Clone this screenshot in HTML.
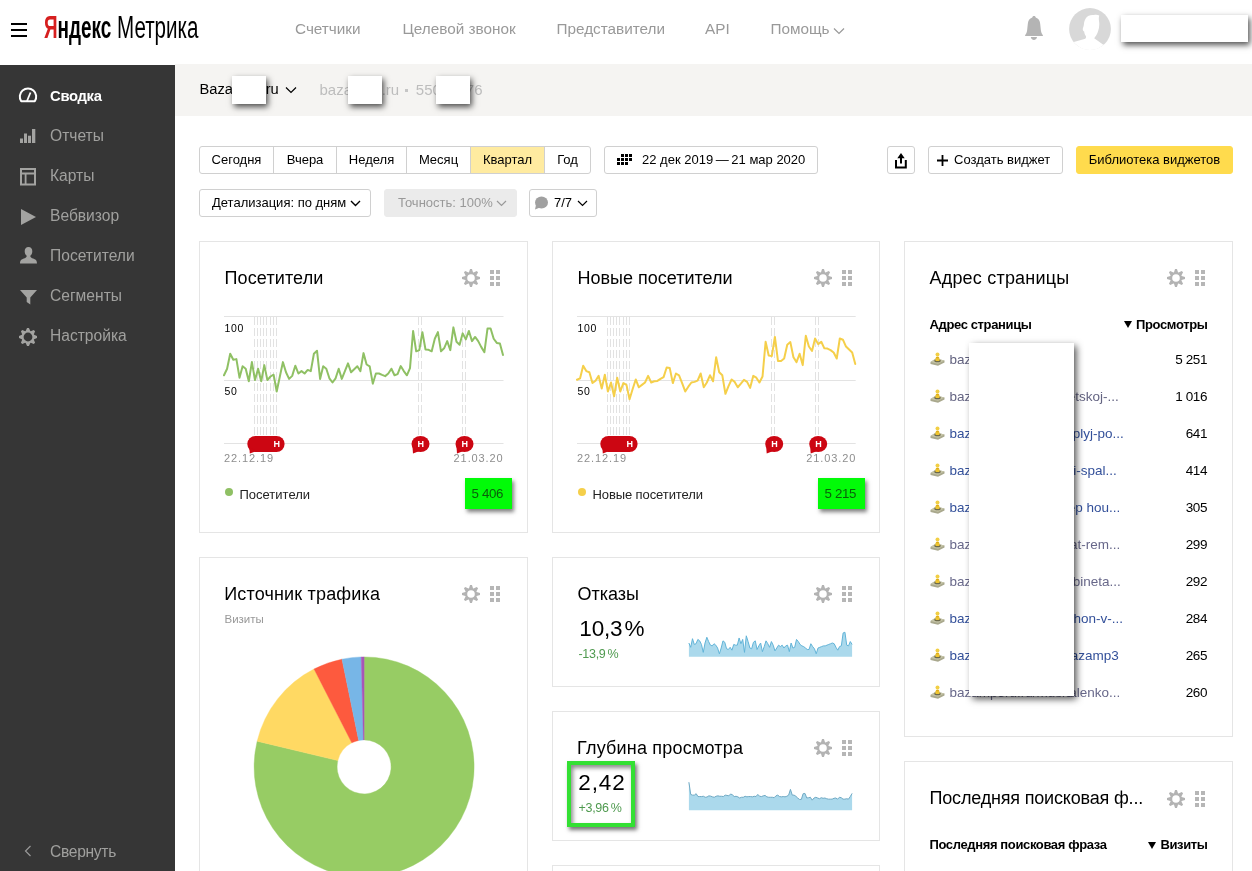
<!DOCTYPE html>
<html lang="ru">
<head>
<meta charset="utf-8">
<title>Яндекс.Метрика</title>
<style>
*{box-sizing:border-box;margin:0;padding:0}
html,body{width:1252px;height:871px;overflow:hidden;background:#fff}
body{will-change:transform;font-family:"Liberation Sans",sans-serif;color:#000;position:relative;font-size:13px}
.abs{position:absolute}
.t{position:absolute;white-space:nowrap;line-height:1}
/* header */
#hdr{position:absolute;left:0;top:0;width:1252px;height:64px;background:#fff}
.nav{position:absolute;top:20.300px;font-size:15.3px;color:#999;white-space:nowrap;line-height:18px}
/* sidebar */
#side{position:absolute;left:0;top:65px;width:175px;height:806px;background:#363636}
.si{position:absolute;left:50px;font-size:15.6px;color:#a0a09e;white-space:nowrap;line-height:20px}
.si.on{color:#fff;font-weight:700;font-size:14.8px;letter-spacing:-.3px;margin-top:0}
/* sub header */
#sub{position:absolute;left:175px;top:64px;width:1077px;height:52px;background:#f5f4f2}
.mask{position:absolute;background:#fff;box-shadow:2px 2.500px 6px rgba(0,0,0,.68)}
/* buttons */
.btn{position:absolute;height:28px;border:1px solid #d0d0d0;border-radius:3px;background:#fff;font-size:13px;line-height:26px;white-space:nowrap;color:#000}
.seg{position:absolute;top:0;height:26px;line-height:26px;text-align:center;border-left:1px solid #d0d0d0}
/* cards */
.card{position:absolute;border:1px solid #e5e5e5;background:#fff}
.ttl{position:absolute;font-size:18px;line-height:22px;white-space:nowrap;color:#000}
.gear{position:absolute;width:18px;height:18px}
.grid{position:absolute;width:10px;height:16px}
.row{position:absolute;left:929px;width:279px;height:20px;font-size:13px;line-height:20px}
.row .u{position:absolute;left:20px;top:0;color:#3a4b8c;white-space:nowrap;font-size:13.5px}
.row .v{position:absolute;right:0;top:0;color:#000;font-size:13.5px;letter-spacing:-.3px}
.row svg{position:absolute;left:1px;top:1px}
.ax{font-size:10.5px;letter-spacing:.7px;color:#000}
.dt{font-size:11px;letter-spacing:.9px;color:#8e8e8e}
.gbox{background:#02fb08;box-shadow:2px 2.500px 4px rgba(0,0,0,.5);font-size:13.3px;line-height:32px;text-align:center;color:#0b5f0b;letter-spacing:-.4px;white-space:nowrap;padding-right:2.500px}
.th{font-size:13px;font-weight:700;letter-spacing:-.37px;color:#000}
.tri{display:inline-block;width:0;height:0;border-left:4px solid transparent;border-right:4px solid transparent;border-top:7.500px solid #000;margin-right:4px;vertical-align:.5px}
.url{font-size:13.5px}
.val{font-size:13.5px;letter-spacing:-.4px;color:#000}
.big{font-size:22.5px;color:#000}
.dl{font-size:12.5px;color:#4f9a4f;letter-spacing:-.3px}
</style>
</head>
<body>

<!-- ============ HEADER ============ -->
<div id="hdr">
  <svg class="abs" style="left:11px;top:23px" width="16" height="14" viewBox="0 0 16 14"><rect x="0" y="0" width="16" height="2" fill="#000"/><rect x="0" y="6" width="16" height="2" fill="#000"/><rect x="0" y="12" width="16" height="2" fill="#000"/></svg>
  <div class="t" id="lg1" style="left:43.500px;top:12.400px;font-size:31px;font-weight:700;transform-origin:0 0;transform:scaleX(.61);line-height:32px"><span style="color:#d61f1f">Я</span>ндекс</div>
  <div class="t" id="lg2" style="left:116.500px;top:12.400px;font-size:31px;font-weight:400;transform-origin:0 0;transform:scaleX(.664);line-height:32px">Метрика</div>

  <div class="nav" style="left:295px">Счетчики</div>
  <div class="nav" style="left:402.5px">Целевой звонок</div>
  <div class="nav" style="left:556.5px">Представители</div>
  <div class="nav" style="left:705px">API</div>
  <div class="nav" style="left:770.5px">Помощь</div>
  <svg class="abs" style="left:833px;top:27px" width="12" height="8" viewBox="0 0 12 8"><path d="M1 1.5 L6 6.5 L11 1.5" fill="none" stroke="#999" stroke-width="1.2"/></svg>

  <!-- bell -->
  <svg class="abs" style="left:1024px;top:15px" width="20" height="26" viewBox="0 0 20 26"><path d="M10,1.100 C11,1.100 11.700,1.800 11.700,2.600 C14.500,3.400 16,5.800 16.200,9 L16.900,15.500 C17.200,17.500 18,19.200 18.900,20.200 L18.900,20.900 L1.100,20.900 L1.100,20.200 C2,19.200 2.800,17.500 3.100,15.500 L3.800,9 C4,5.800 5.500,3.400 8.300,2.600 C8.300,1.800 9,1.100 10,1.100 Z" fill="#b4b4b4"/><path d="M6.800,22.100 H13 C12.800,23.800 11.600,25 9.900,25 C8.200,25 7,23.800 6.800,22.100 Z" fill="#b4b4b4"/></svg>
  <!-- avatar -->
  <svg class="abs" style="left:1069px;top:8px" width="42" height="42" viewBox="0 0 42 42">
    <defs><clipPath id="avc"><circle cx="21" cy="21" r="21"/></clipPath></defs>
    <circle cx="21" cy="21" r="20.900" fill="#d8d8d8"/>
    <g clip-path="url(#avc)" fill="#fff">
      <path d="M17,10 C18.500,7.500 22,6.500 25,7 C27,6.600 29,6.800 30.300,7.600 C29.600,9.500 29.800,11 30,13 C30.600,16 30.300,20 29,23.500 C28.200,26 27,28 25.200,30.200 L34,36.500 L44,40 L44,44 L-2,44 L-2,36 L3,34.500 L16.300,30.700 C17.300,29.800 17.300,28.500 16.500,27.500 C15.600,26.300 15.300,25 15.200,23.600 C14.300,23 13.600,22 13.800,20.800 C14.100,19.500 14.800,18 14.900,16.500 C15,14 15.800,12 17,10 Z"/>
    </g>
  </svg>
  <div class="mask" style="left:1121px;top:15px;width:127px;height:27px"></div>
</div>

<!-- ============ SIDEBAR ============ -->
<div id="side"></div>
<div class="si on" style="top:86px">Сводка</div>
<div class="si" style="top:126px">Отчеты</div>
<div class="si" style="top:166px">Карты</div>
<div class="si" style="top:206px">Вебвизор</div>
<div class="si" style="top:246px">Посетители</div>
<div class="si" style="top:286px">Сегменты</div>
<div class="si" style="top:326px">Настройка</div>
<div class="si" style="top:842px;letter-spacing:-.3px">Свернуть</div>
<svg class="abs" style="left:24px;top:845px" width="8" height="12" viewBox="0 0 8 12"><path d="M6.500 1 L1.500 6 L6.500 11" fill="none" stroke="#999" stroke-width="1.2"/></svg>
<svg class="abs" style="left:18px;top:87px" width="20" height="16" viewBox="0 0 20 16"><path d="M3.200 14.200 A8.200 8.200 0 1 1 16.800 14.200 Z" fill="none" stroke="#fff" stroke-width="2" stroke-linejoin="round"/><path d="M9 14 L12.500 5.500" stroke="#fff" stroke-width="1.800" fill="none"/></svg>
<svg class="abs" style="left:20px;top:129px" width="16" height="14" viewBox="0 0 16 14" fill="#a3a3a1"><rect x="0" y="9.500" width="3" height="4.500"/><rect x="4" y="4.500" width="3" height="9.500"/><rect x="8" y="6.700" width="3" height="7.300"/><rect x="12" y="0" width="3.300" height="14"/></svg>
<svg class="abs" style="left:20px;top:168px" width="16" height="18" viewBox="0 0 16 18"><rect x="1" y="1" width="14" height="15.500" fill="none" stroke="#a3a3a1" stroke-width="2"/><path d="M1 5.500 H15 M5.600 5.500 V16.500" stroke="#a3a3a1" stroke-width="1.800" fill="none"/></svg>
<svg class="abs" style="left:21px;top:209px" width="15" height="16" viewBox="0 0 15 16"><path d="M0 0 L15 8 L0 16 Z" fill="#a3a3a1"/></svg>
<svg class="abs" style="left:19.500px;top:247px" width="17" height="16.500" viewBox="0 0 17 16.500"><path d="M8.500 0 C11 0 12.300 1.800 12.300 4.200 C12.300 6.200 11.500 8 10.300 8.800 C10.300 10.200 11 10.800 13 11.500 C15.500 12.300 16.800 13 17 16.500 H0 C0.200 13 1.500 12.300 4 11.500 C6 10.800 6.700 10.200 6.700 8.800 C5.500 8 4.700 6.200 4.700 4.200 C4.700 1.800 6 0 8.500 0 Z" fill="#a3a3a1"/></svg>
<svg class="abs" style="left:19.500px;top:290px" width="17" height="15" viewBox="0 0 17 15"><path d="M0 0 H17 L10.300 7.500 V14.500 L6.700 12 V7.500 Z" fill="#a3a3a1"/></svg>
<svg class="abs" style="left:19px;top:328.300px" width="18" height="18" viewBox="0 0 18 18"><path fill-rule="evenodd" d="M6.83,2.87 L8.05,-0.05 L9.95,-0.05 L11.17,2.87 L11.80,3.13 L14.72,1.93 L16.07,3.28 L14.87,6.20 L15.13,6.83 L18.05,8.05 L18.05,9.95 L15.13,11.17 L14.87,11.80 L16.07,14.72 L14.72,16.07 L11.80,14.87 L11.17,15.13 L9.95,18.05 L8.05,18.05 L6.83,15.13 L6.20,14.87 L3.28,16.07 L1.93,14.72 L3.13,11.80 L2.87,11.17 L-0.05,9.95 L-0.05,8.05 L2.87,6.83 L3.13,6.20 L1.93,3.28 L3.28,1.93 L6.20,3.13 Z M13.40,9.00 A4.4,4.4 0 1 0 4.60,9.00 A4.4,4.4 0 1 0 13.40,9.00 Z" fill="#a3a3a1"/></svg>

<!-- ============ SUB HEADER ============ -->
<div id="sub"></div>
<div class="t" style="left:199.500px;top:82.300px;font-size:14.7px;color:#000">Bazamp3.ru</div>
<svg class="abs" style="left:285px;top:86px" width="12" height="8" viewBox="0 0 12 8"><path d="M1 1.500 L6 6.500 L11 1.500" fill="none" stroke="#000" stroke-width="1.200"/></svg>
<div class="t" style="left:319.500px;top:82px;font-size:15px;color:#bdbdbd">bazamp3</div>
<div class="t" style="left:340px;width:59.200px;text-align:right;top:82px;font-size:15px;color:#bdbdbd">ru.ru</div>
<div class="abs" style="left:405px;top:89px;width:3px;height:3px;background:#c6c6c6"></div>
<div class="t" style="left:415.800px;top:82px;font-size:15px;color:#bdbdbd">55012376</div>
<div class="mask" style="left:232px;top:76px;width:34px;height:27.500px"></div>
<div class="mask" style="left:348px;top:76px;width:34px;height:27.500px"></div>
<div class="mask" style="left:436px;top:76px;width:34px;height:27.500px"></div>

<!-- ============ TOOLBAR ============ -->
<div class="btn" style="left:199px;top:146px;width:392px">
  <div class="seg" style="left:0;width:73px;border-left:0">Сегодня</div>
  <div class="seg" style="left:73px;width:63px">Вчера</div>
  <div class="seg" style="left:136px;width:70px">Неделя</div>
  <div class="seg" style="left:206px;width:64px">Месяц</div>
  <div class="seg" style="left:270px;width:74px;background:#ffeba0">Квартал</div>
  <div class="seg" style="left:344px;width:46px">Год</div>
</div>
<div class="btn" style="left:604px;top:146px;width:214px">
  <svg class="abs" style="left:12px;top:7px" width="15" height="11" viewBox="0 0 15 11" fill="#000"><rect x="4" y="0" width="3" height="3"/><rect x="8" y="0" width="3" height="3"/><rect x="12" y="0" width="3" height="3"/><rect x="0" y="4" width="3" height="3"/><rect x="4" y="4" width="3" height="3"/><rect x="8" y="4" width="3" height="3"/><rect x="12" y="4" width="3" height="3"/><rect x="0" y="8" width="3" height="3"/><rect x="4" y="8" width="3" height="3"/><rect x="8" y="8" width="3" height="3"/></svg>
  <span class="abs" style="left:37px;top:0">22 дек 2019&#8201;—&#8201;21 мар 2020</span>
</div>
<div class="btn" style="left:887px;top:146px;width:28px">
  <svg class="abs" style="left:7px;top:6.400px" width="12" height="16" viewBox="0 0 12 16"><path d="M6 0 L9.700 5.200 H7 V10.600 H5 V5.200 H2.300 Z" fill="#000"/><path d="M0 7 H2 V13.400 H9.800 V7 H11.800 V15.400 H0 Z" fill="#000"/></svg>
</div>
<div class="btn" style="left:928px;top:146px;width:135px">
  <svg class="abs" style="left:8px;top:8px" width="11" height="11" viewBox="0 0 11 11"><path d="M4.600 0h1.800v4.600h4.600v1.800H6.400v4.600H4.600V6.400H0V4.600h4.600z" fill="#000"/></svg>
  <span class="abs" style="left:25px;top:0">Создать виджет</span>
</div>
<div class="btn" style="left:1076px;top:146px;width:157px;background:#ffdb4d;border-color:#ffdb4d;text-align:center">Библиотека виджетов</div>

<div class="btn" style="left:199px;top:189px;width:172px">
  <span class="abs" style="left:12px;top:0">Детализация: по дням</span>
  <svg class="abs" style="left:150px;top:10px" width="11" height="7" viewBox="0 0 11 7"><path d="M1 1 L5.500 5.500 L10 1" fill="none" stroke="#000" stroke-width="1.400"/></svg>
</div>
<div class="btn" style="left:384px;top:189px;width:133px;background:#ebebeb;border-color:#ebebeb;color:#999">
  <span class="abs" style="left:13px;top:0">Точность: 100%</span>
  <svg class="abs" style="left:111px;top:10px" width="11" height="7" viewBox="0 0 11 7"><path d="M1 1 L5.500 5.500 L10 1" fill="none" stroke="#999" stroke-width="1.200"/></svg>
</div>
<div class="btn" style="left:529px;top:189px;width:68px">
  <svg class="abs" style="left:3.500px;top:6px" width="14" height="14" viewBox="0 0 14 14"><ellipse cx="7.500" cy="6.500" rx="6.500" ry="6" fill="#a0a0a0"/><path d="M2 9 L1 13.500 L6 11.500 Z" fill="#a0a0a0"/></svg>
  <span class="abs" style="left:24px;top:0">7/7</span>
  <svg class="abs" style="left:47px;top:10px" width="11" height="7" viewBox="0 0 11 7"><path d="M1 1 L5.500 5.500 L10 1" fill="none" stroke="#000" stroke-width="1.200"/></svg>
</div>

<!-- ============ CARDS ============ -->
<div class="card" style="left:199px;top:241px;width:329px;height:292px"></div>
<div class="card" style="left:552px;top:241px;width:328px;height:292px"></div>
<div class="card" style="left:904px;top:241px;width:329px;height:496px"></div>
<div class="card" style="left:199px;top:557px;width:329px;height:330px"></div>
<div class="card" style="left:552px;top:557px;width:328px;height:130px"></div>
<div class="card" style="left:552px;top:711px;width:328px;height:130px"></div>
<div class="card" style="left:552px;top:865px;width:328px;height:40px"></div>
<div class="card" style="left:904px;top:761px;width:329px;height:140px"></div>

<div class="ttl" style="left:224.5px;top:267px;letter-spacing:0.13px">Посетители</div>
<svg class="abs" style="left:462px;top:269px" width="18" height="18" viewBox="0 0 18 18"><path fill-rule="evenodd" d="M7.00,3.34 L8.05,-0.05 L9.95,-0.05 L11.00,3.34 L11.58,3.59 L14.72,1.93 L16.07,3.28 L14.41,6.42 L14.66,7.00 L18.05,8.05 L18.05,9.95 L14.66,11.00 L14.41,11.58 L16.07,14.72 L14.72,16.07 L11.58,14.41 L11.00,14.66 L9.95,18.05 L8.05,18.05 L7.00,14.66 L6.42,14.41 L3.28,16.07 L1.93,14.72 L3.59,11.58 L3.34,11.00 L-0.05,9.95 L-0.05,8.05 L3.34,7.00 L3.59,6.42 L1.93,3.28 L3.28,1.93 L6.42,3.59 Z M12.80,9.00 A3.8,3.8 0 1 0 5.20,9.00 A3.8,3.8 0 1 0 12.80,9.00 Z" fill="#b3b3b3"/></svg>
<svg class="abs" style="left:490px;top:270px" width="10" height="16" viewBox="0 0 10 16"><rect x="0" y="0" width="4" height="4" fill="#b6b6b6"/><rect x="6" y="0" width="4" height="4" fill="#b6b6b6"/><rect x="0" y="6" width="4" height="4" fill="#b6b6b6"/><rect x="6" y="6" width="4" height="4" fill="#b6b6b6"/><rect x="0" y="12" width="4" height="4" fill="#b6b6b6"/><rect x="6" y="12" width="4" height="4" fill="#b6b6b6"/></svg>
<div class="t ax" style="left:224.5px;top:323px">100</div>
<div class="t ax" style="left:224.5px;top:386px">50</div>
<div class="t dt" style="left:224px;top:452.5px">22.12.19</div>
<div class="t dt" style="left:453.6px;top:452.5px;width:49px;text-align:right">21.03.20</div>
<div class="abs" style="left:225px;top:487.700px;width:8.400px;height:8.400px;border-radius:50%;background:#8fc064"></div>
<div class="t" style="left:239.5px;top:487.700px;font-size:13px;color:#222;letter-spacing:0px">Посетители</div>
<div class="abs gbox" style="left:465px;top:478px;width:47px;height:31px">5 406</div>
<div class="ttl" style="left:577.5px;top:267px;letter-spacing:0px">Новые посетители</div>
<svg class="abs" style="left:814px;top:269px" width="18" height="18" viewBox="0 0 18 18"><path fill-rule="evenodd" d="M7.00,3.34 L8.05,-0.05 L9.95,-0.05 L11.00,3.34 L11.58,3.59 L14.72,1.93 L16.07,3.28 L14.41,6.42 L14.66,7.00 L18.05,8.05 L18.05,9.95 L14.66,11.00 L14.41,11.58 L16.07,14.72 L14.72,16.07 L11.58,14.41 L11.00,14.66 L9.95,18.05 L8.05,18.05 L7.00,14.66 L6.42,14.41 L3.28,16.07 L1.93,14.72 L3.59,11.58 L3.34,11.00 L-0.05,9.95 L-0.05,8.05 L3.34,7.00 L3.59,6.42 L1.93,3.28 L3.28,1.93 L6.42,3.59 Z M12.80,9.00 A3.8,3.8 0 1 0 5.20,9.00 A3.8,3.8 0 1 0 12.80,9.00 Z" fill="#b3b3b3"/></svg>
<svg class="abs" style="left:842px;top:270px" width="10" height="16" viewBox="0 0 10 16"><rect x="0" y="0" width="4" height="4" fill="#b6b6b6"/><rect x="6" y="0" width="4" height="4" fill="#b6b6b6"/><rect x="0" y="6" width="4" height="4" fill="#b6b6b6"/><rect x="6" y="6" width="4" height="4" fill="#b6b6b6"/><rect x="0" y="12" width="4" height="4" fill="#b6b6b6"/><rect x="6" y="12" width="4" height="4" fill="#b6b6b6"/></svg>
<div class="t ax" style="left:577.5px;top:323px">100</div>
<div class="t ax" style="left:577.5px;top:386px">50</div>
<div class="t dt" style="left:577px;top:452.5px">22.12.19</div>
<div class="t dt" style="left:806.2px;top:452.5px;width:49px;text-align:right">21.03.20</div>
<div class="abs" style="left:578px;top:487.700px;width:8.400px;height:8.400px;border-radius:50%;background:#f5cf4a"></div>
<div class="t" style="left:592.5px;top:487.700px;font-size:13px;color:#222;letter-spacing:-0.1px">Новые посетители</div>
<div class="abs gbox" style="left:818px;top:478px;width:47px;height:31px">5 215</div>
<div class="ttl" style="left:929.500px;top:267px;letter-spacing:.2px">Адрес страницы</div>
<svg class="abs" style="left:1167px;top:269px" width="18" height="18" viewBox="0 0 18 18"><path fill-rule="evenodd" d="M7.00,3.34 L8.05,-0.05 L9.95,-0.05 L11.00,3.34 L11.58,3.59 L14.72,1.93 L16.07,3.28 L14.41,6.42 L14.66,7.00 L18.05,8.05 L18.05,9.95 L14.66,11.00 L14.41,11.58 L16.07,14.72 L14.72,16.07 L11.58,14.41 L11.00,14.66 L9.95,18.05 L8.05,18.05 L7.00,14.66 L6.42,14.41 L3.28,16.07 L1.93,14.72 L3.59,11.58 L3.34,11.00 L-0.05,9.95 L-0.05,8.05 L3.34,7.00 L3.59,6.42 L1.93,3.28 L3.28,1.93 L6.42,3.59 Z M12.80,9.00 A3.8,3.8 0 1 0 5.20,9.00 A3.8,3.8 0 1 0 12.80,9.00 Z" fill="#b3b3b3"/></svg>
<svg class="abs" style="left:1195px;top:270px" width="10" height="16" viewBox="0 0 10 16"><rect x="0" y="0" width="4" height="4" fill="#b6b6b6"/><rect x="6" y="0" width="4" height="4" fill="#b6b6b6"/><rect x="0" y="6" width="4" height="4" fill="#b6b6b6"/><rect x="6" y="6" width="4" height="4" fill="#b6b6b6"/><rect x="0" y="12" width="4" height="4" fill="#b6b6b6"/><rect x="6" y="12" width="4" height="4" fill="#b6b6b6"/></svg>
<div class="t th" style="left:929.500px;top:317.500px">Адрес страницы</div>
<div class="t th" style="left:1100.500px;top:317.500px;width:107px;text-align:right"><span class="tri"></span>Просмотры</div>
<svg class="abs" style="left:929.5px;top:352px" width="15" height="14" viewBox="0 0 15 14"><path d="M0.500 10 L6 6.500 L14.500 8.500 L14.500 10.500 L8 13.800 L0.500 12 Z" fill="#a9a88d"/><path d="M0.500 10 L6 6.500 L14.500 8.500 L8 11.800 Z" fill="#c6c5a8"/><ellipse cx="7.500" cy="8.800" rx="3.200" ry="1.500" fill="#6d6a4a"/><path d="M5.300 8.500 C5.300 5.800 6 4.600 7.500 4.600 C9 4.600 9.700 5.800 9.700 8.500 C8.800 9.300 6.200 9.300 5.300 8.500 Z" fill="#efc530"/><circle cx="7.500" cy="2.500" r="2" fill="#f2cf45"/><path d="M6.200 5.200 h2.600 v1 h-2.600z" fill="#d9a514"/></svg>
<div class="t url" style="left:949.500px;top:353.0px;color:#62627f">bazamp3ru.ru/music</div>
<div class="t val" style="left:1147px;width:60px;text-align:right;top:353.0px">5 251</div>
<svg class="abs" style="left:929.5px;top:389px" width="15" height="14" viewBox="0 0 15 14"><path d="M0.500 10 L6 6.500 L14.500 8.500 L14.500 10.500 L8 13.800 L0.500 12 Z" fill="#a9a88d"/><path d="M0.500 10 L6 6.500 L14.500 8.500 L8 11.800 Z" fill="#c6c5a8"/><ellipse cx="7.500" cy="8.800" rx="3.200" ry="1.500" fill="#6d6a4a"/><path d="M5.300 8.500 C5.300 5.800 6 4.600 7.500 4.600 C9 4.600 9.700 5.800 9.700 8.500 C8.800 9.300 6.200 9.300 5.300 8.500 Z" fill="#efc530"/><circle cx="7.500" cy="2.500" r="2" fill="#f2cf45"/><path d="M6.200 5.200 h2.600 v1 h-2.600z" fill="#d9a514"/></svg>
<div class="t url" style="left:949.500px;top:390.0px;color:#646482">bazamp3ru.ru/music</div>
<div class="t url" style="left:1038.8px;width:80px;text-align:right;top:390.0px;color:#646482">etskoj-...</div>
<div class="t val" style="left:1147px;width:60px;text-align:right;top:390.0px">1 016</div>
<svg class="abs" style="left:929.5px;top:426px" width="15" height="14" viewBox="0 0 15 14"><path d="M0.500 10 L6 6.500 L14.500 8.500 L14.500 10.500 L8 13.800 L0.500 12 Z" fill="#a9a88d"/><path d="M0.500 10 L6 6.500 L14.500 8.500 L8 11.800 Z" fill="#c6c5a8"/><ellipse cx="7.500" cy="8.800" rx="3.200" ry="1.500" fill="#6d6a4a"/><path d="M5.300 8.500 C5.300 5.800 6 4.600 7.500 4.600 C9 4.600 9.700 5.800 9.700 8.500 C8.800 9.300 6.200 9.300 5.300 8.500 Z" fill="#efc530"/><circle cx="7.500" cy="2.500" r="2" fill="#f2cf45"/><path d="M6.200 5.200 h2.600 v1 h-2.600z" fill="#d9a514"/></svg>
<div class="t url" style="left:949.500px;top:427.0px;color:#33509a">bazamp3ru.ru/music</div>
<div class="t url" style="left:1043.7px;width:80px;text-align:right;top:427.0px;color:#33509a">plyj-po...</div>
<div class="t val" style="left:1147px;width:60px;text-align:right;top:427.0px">641</div>
<svg class="abs" style="left:929.5px;top:463px" width="15" height="14" viewBox="0 0 15 14"><path d="M0.500 10 L6 6.500 L14.500 8.500 L14.500 10.500 L8 13.800 L0.500 12 Z" fill="#a9a88d"/><path d="M0.500 10 L6 6.500 L14.500 8.500 L8 11.800 Z" fill="#c6c5a8"/><ellipse cx="7.500" cy="8.800" rx="3.200" ry="1.500" fill="#6d6a4a"/><path d="M5.300 8.500 C5.300 5.800 6 4.600 7.500 4.600 C9 4.600 9.700 5.800 9.700 8.500 C8.800 9.300 6.200 9.300 5.300 8.500 Z" fill="#efc530"/><circle cx="7.500" cy="2.500" r="2" fill="#f2cf45"/><path d="M6.200 5.200 h2.600 v1 h-2.600z" fill="#d9a514"/></svg>
<div class="t url" style="left:949.500px;top:464.0px;color:#33509a">bazamp3ru.ru/music</div>
<div class="t url" style="left:1036.8px;width:80px;text-align:right;top:464.0px;color:#33509a">i-spal...</div>
<div class="t val" style="left:1147px;width:60px;text-align:right;top:464.0px">414</div>
<svg class="abs" style="left:929.5px;top:500px" width="15" height="14" viewBox="0 0 15 14"><path d="M0.500 10 L6 6.500 L14.500 8.500 L14.500 10.500 L8 13.800 L0.500 12 Z" fill="#a9a88d"/><path d="M0.500 10 L6 6.500 L14.500 8.500 L8 11.800 Z" fill="#c6c5a8"/><ellipse cx="7.500" cy="8.800" rx="3.200" ry="1.500" fill="#6d6a4a"/><path d="M5.300 8.500 C5.300 5.800 6 4.600 7.500 4.600 C9 4.600 9.700 5.800 9.700 8.500 C8.800 9.300 6.200 9.300 5.300 8.500 Z" fill="#efc530"/><circle cx="7.500" cy="2.500" r="2" fill="#f2cf45"/><path d="M6.200 5.200 h2.600 v1 h-2.600z" fill="#d9a514"/></svg>
<div class="t url" style="left:949.500px;top:501.0px;color:#33509a">bazamp3ru.ru/music</div>
<div class="t url" style="left:1040.3px;width:80px;text-align:right;top:501.0px;color:#33509a">ep hou...</div>
<div class="t val" style="left:1147px;width:60px;text-align:right;top:501.0px">305</div>
<svg class="abs" style="left:929.5px;top:537px" width="15" height="14" viewBox="0 0 15 14"><path d="M0.500 10 L6 6.500 L14.500 8.500 L14.500 10.500 L8 13.800 L0.500 12 Z" fill="#a9a88d"/><path d="M0.500 10 L6 6.500 L14.500 8.500 L8 11.800 Z" fill="#c6c5a8"/><ellipse cx="7.500" cy="8.800" rx="3.200" ry="1.500" fill="#6d6a4a"/><path d="M5.300 8.500 C5.300 5.800 6 4.600 7.500 4.600 C9 4.600 9.700 5.800 9.700 8.500 C8.800 9.300 6.200 9.300 5.300 8.500 Z" fill="#efc530"/><circle cx="7.500" cy="2.500" r="2" fill="#f2cf45"/><path d="M6.200 5.200 h2.600 v1 h-2.600z" fill="#d9a514"/></svg>
<div class="t url" style="left:949.500px;top:538.0px;color:#68688a">bazamp3ru.ru/music</div>
<div class="t url" style="left:1040.3px;width:80px;text-align:right;top:538.0px;color:#68688a">at-rem...</div>
<div class="t val" style="left:1147px;width:60px;text-align:right;top:538.0px">299</div>
<svg class="abs" style="left:929.5px;top:574px" width="15" height="14" viewBox="0 0 15 14"><path d="M0.500 10 L6 6.500 L14.500 8.500 L14.500 10.500 L8 13.800 L0.500 12 Z" fill="#a9a88d"/><path d="M0.500 10 L6 6.500 L14.500 8.500 L8 11.800 Z" fill="#c6c5a8"/><ellipse cx="7.500" cy="8.800" rx="3.200" ry="1.500" fill="#6d6a4a"/><path d="M5.300 8.500 C5.300 5.800 6 4.600 7.500 4.600 C9 4.600 9.700 5.800 9.700 8.500 C8.800 9.300 6.200 9.300 5.300 8.500 Z" fill="#efc530"/><circle cx="7.500" cy="2.500" r="2" fill="#f2cf45"/><path d="M6.200 5.200 h2.600 v1 h-2.600z" fill="#d9a514"/></svg>
<div class="t url" style="left:949.500px;top:575.0px;color:#68688a">bazamp3ru.ru/music</div>
<div class="t url" style="left:1040.8px;width:80px;text-align:right;top:575.0px;color:#68688a">bineta...</div>
<div class="t val" style="left:1147px;width:60px;text-align:right;top:575.0px">292</div>
<svg class="abs" style="left:929.5px;top:611px" width="15" height="14" viewBox="0 0 15 14"><path d="M0.500 10 L6 6.500 L14.500 8.500 L14.500 10.500 L8 13.800 L0.500 12 Z" fill="#a9a88d"/><path d="M0.500 10 L6 6.500 L14.500 8.500 L8 11.800 Z" fill="#c6c5a8"/><ellipse cx="7.500" cy="8.800" rx="3.200" ry="1.500" fill="#6d6a4a"/><path d="M5.300 8.500 C5.300 5.800 6 4.600 7.500 4.600 C9 4.600 9.700 5.800 9.700 8.500 C8.800 9.300 6.200 9.300 5.300 8.500 Z" fill="#efc530"/><circle cx="7.500" cy="2.500" r="2" fill="#f2cf45"/><path d="M6.200 5.200 h2.600 v1 h-2.600z" fill="#d9a514"/></svg>
<div class="t url" style="left:949.500px;top:612.0px;color:#33509a">bazamp3ru.ru/music</div>
<div class="t url" style="left:1043.1px;width:80px;text-align:right;top:612.0px;color:#33509a">ihon-v-...</div>
<div class="t val" style="left:1147px;width:60px;text-align:right;top:612.0px">284</div>
<svg class="abs" style="left:929.5px;top:648px" width="15" height="14" viewBox="0 0 15 14"><path d="M0.500 10 L6 6.500 L14.500 8.500 L14.500 10.500 L8 13.800 L0.500 12 Z" fill="#a9a88d"/><path d="M0.500 10 L6 6.500 L14.500 8.500 L8 11.800 Z" fill="#c6c5a8"/><ellipse cx="7.500" cy="8.800" rx="3.200" ry="1.500" fill="#6d6a4a"/><path d="M5.300 8.500 C5.300 5.800 6 4.600 7.500 4.600 C9 4.600 9.700 5.800 9.700 8.500 C8.800 9.300 6.200 9.300 5.300 8.500 Z" fill="#efc530"/><circle cx="7.500" cy="2.500" r="2" fill="#f2cf45"/><path d="M6.200 5.200 h2.600 v1 h-2.600z" fill="#d9a514"/></svg>
<div class="t url" style="left:949.500px;top:649.0px;color:#33509a">bazamp3ru.ru/music</div>
<div class="t url" style="left:1038.8px;width:80px;text-align:right;top:649.0px;color:#33509a">azamp3</div>
<div class="t val" style="left:1147px;width:60px;text-align:right;top:649.0px">265</div>
<svg class="abs" style="left:929.5px;top:685px" width="15" height="14" viewBox="0 0 15 14"><path d="M0.500 10 L6 6.500 L14.500 8.500 L14.500 10.500 L8 13.800 L0.500 12 Z" fill="#a9a88d"/><path d="M0.500 10 L6 6.500 L14.500 8.500 L8 11.800 Z" fill="#c6c5a8"/><ellipse cx="7.500" cy="8.800" rx="3.200" ry="1.500" fill="#6d6a4a"/><path d="M5.300 8.500 C5.300 5.800 6 4.600 7.500 4.600 C9 4.600 9.700 5.800 9.700 8.500 C8.800 9.300 6.200 9.300 5.300 8.500 Z" fill="#efc530"/><circle cx="7.500" cy="2.500" r="2" fill="#f2cf45"/><path d="M6.200 5.200 h2.600 v1 h-2.600z" fill="#d9a514"/></svg>
<div class="t url" style="left:949.500px;top:686.0px;color:#68688a">bazamp3ru.ru/music</div>
<div class="t url" style="left:1040.3px;width:80px;text-align:right;top:686.0px;color:#68688a">alenko...</div>
<div class="t val" style="left:1147px;width:60px;text-align:right;top:686.0px">260</div>
<div class="mask" style="left:969px;top:343px;width:105px;height:353px;box-shadow:2.500px 3px 7px rgba(0,0,0,.68)"></div>
<div class="ttl" style="left:224.200px;top:582.500px;letter-spacing:.17px">Источник трафика</div>
<svg class="abs" style="left:462px;top:584.5px" width="18" height="18" viewBox="0 0 18 18"><path fill-rule="evenodd" d="M7.00,3.34 L8.05,-0.05 L9.95,-0.05 L11.00,3.34 L11.58,3.59 L14.72,1.93 L16.07,3.28 L14.41,6.42 L14.66,7.00 L18.05,8.05 L18.05,9.95 L14.66,11.00 L14.41,11.58 L16.07,14.72 L14.72,16.07 L11.58,14.41 L11.00,14.66 L9.95,18.05 L8.05,18.05 L7.00,14.66 L6.42,14.41 L3.28,16.07 L1.93,14.72 L3.59,11.58 L3.34,11.00 L-0.05,9.95 L-0.05,8.05 L3.34,7.00 L3.59,6.42 L1.93,3.28 L3.28,1.93 L6.42,3.59 Z M12.80,9.00 A3.8,3.8 0 1 0 5.20,9.00 A3.8,3.8 0 1 0 12.80,9.00 Z" fill="#b3b3b3"/></svg>
<svg class="abs" style="left:490px;top:585.5px" width="10" height="16" viewBox="0 0 10 16"><rect x="0" y="0" width="4" height="4" fill="#b6b6b6"/><rect x="6" y="0" width="4" height="4" fill="#b6b6b6"/><rect x="0" y="6" width="4" height="4" fill="#b6b6b6"/><rect x="6" y="6" width="4" height="4" fill="#b6b6b6"/><rect x="0" y="12" width="4" height="4" fill="#b6b6b6"/><rect x="6" y="12" width="4" height="4" fill="#b6b6b6"/></svg>
<div class="t" style="left:224.500px;top:613.500px;font-size:11.5px;color:#999">Визиты</div>
<div class="ttl" style="left:577.500px;top:582.500px">Отказы</div>
<svg class="abs" style="left:813.5px;top:584.5px" width="18" height="18" viewBox="0 0 18 18"><path fill-rule="evenodd" d="M7.00,3.34 L8.05,-0.05 L9.95,-0.05 L11.00,3.34 L11.58,3.59 L14.72,1.93 L16.07,3.28 L14.41,6.42 L14.66,7.00 L18.05,8.05 L18.05,9.95 L14.66,11.00 L14.41,11.58 L16.07,14.72 L14.72,16.07 L11.58,14.41 L11.00,14.66 L9.95,18.05 L8.05,18.05 L7.00,14.66 L6.42,14.41 L3.28,16.07 L1.93,14.72 L3.59,11.58 L3.34,11.00 L-0.05,9.95 L-0.05,8.05 L3.34,7.00 L3.59,6.42 L1.93,3.28 L3.28,1.93 L6.42,3.59 Z M12.80,9.00 A3.8,3.8 0 1 0 5.20,9.00 A3.8,3.8 0 1 0 12.80,9.00 Z" fill="#b3b3b3"/></svg>
<svg class="abs" style="left:841.5px;top:585.5px" width="10" height="16" viewBox="0 0 10 16"><rect x="0" y="0" width="4" height="4" fill="#b6b6b6"/><rect x="6" y="0" width="4" height="4" fill="#b6b6b6"/><rect x="0" y="6" width="4" height="4" fill="#b6b6b6"/><rect x="6" y="6" width="4" height="4" fill="#b6b6b6"/><rect x="0" y="12" width="4" height="4" fill="#b6b6b6"/><rect x="6" y="12" width="4" height="4" fill="#b6b6b6"/></svg>
<div class="t big" style="left:579.300px;top:617.900px;letter-spacing:-.15px">10,3<span style="margin-left:2px">%</span></div>
<div class="t dl" style="left:578.500px;top:647.500px">-13,9<span style="margin-left:2px">%</span></div>
<div class="ttl" style="left:577px;top:736.500px;letter-spacing:.2px">Глубина просмотра</div>
<svg class="abs" style="left:813.5px;top:738.5px" width="18" height="18" viewBox="0 0 18 18"><path fill-rule="evenodd" d="M7.00,3.34 L8.05,-0.05 L9.95,-0.05 L11.00,3.34 L11.58,3.59 L14.72,1.93 L16.07,3.28 L14.41,6.42 L14.66,7.00 L18.05,8.05 L18.05,9.95 L14.66,11.00 L14.41,11.58 L16.07,14.72 L14.72,16.07 L11.58,14.41 L11.00,14.66 L9.95,18.05 L8.05,18.05 L7.00,14.66 L6.42,14.41 L3.28,16.07 L1.93,14.72 L3.59,11.58 L3.34,11.00 L-0.05,9.95 L-0.05,8.05 L3.34,7.00 L3.59,6.42 L1.93,3.28 L3.28,1.93 L6.42,3.59 Z M12.80,9.00 A3.8,3.8 0 1 0 5.20,9.00 A3.8,3.8 0 1 0 12.80,9.00 Z" fill="#b3b3b3"/></svg>
<svg class="abs" style="left:841.5px;top:739.5px" width="10" height="16" viewBox="0 0 10 16"><rect x="0" y="0" width="4" height="4" fill="#b6b6b6"/><rect x="6" y="0" width="4" height="4" fill="#b6b6b6"/><rect x="0" y="6" width="4" height="4" fill="#b6b6b6"/><rect x="6" y="6" width="4" height="4" fill="#b6b6b6"/><rect x="0" y="12" width="4" height="4" fill="#b6b6b6"/><rect x="6" y="12" width="4" height="4" fill="#b6b6b6"/></svg>
<div class="t big" style="left:578.300px;top:771.700px;letter-spacing:.9px">2,42</div>
<div class="t dl" style="left:578.500px;top:801.700px">+3,96<span style="margin-left:2px">%</span></div>
<div class="abs" style="left:567px;top:760.700px;width:68.200px;height:66px;border:4.500px solid #33e033;filter:blur(.6px);box-shadow:2px 3px 4px rgba(0,0,0,.55), inset 2px 3px 4px rgba(0,0,0,.45)"></div>
<div class="ttl" style="left:929.500px;top:787px;letter-spacing:-.18px">Последняя поисковая ф...</div>
<svg class="abs" style="left:1167px;top:789.5px" width="18" height="18" viewBox="0 0 18 18"><path fill-rule="evenodd" d="M7.00,3.34 L8.05,-0.05 L9.95,-0.05 L11.00,3.34 L11.58,3.59 L14.72,1.93 L16.07,3.28 L14.41,6.42 L14.66,7.00 L18.05,8.05 L18.05,9.95 L14.66,11.00 L14.41,11.58 L16.07,14.72 L14.72,16.07 L11.58,14.41 L11.00,14.66 L9.95,18.05 L8.05,18.05 L7.00,14.66 L6.42,14.41 L3.28,16.07 L1.93,14.72 L3.59,11.58 L3.34,11.00 L-0.05,9.95 L-0.05,8.05 L3.34,7.00 L3.59,6.42 L1.93,3.28 L3.28,1.93 L6.42,3.59 Z M12.80,9.00 A3.8,3.8 0 1 0 5.20,9.00 A3.8,3.8 0 1 0 12.80,9.00 Z" fill="#b3b3b3"/></svg>
<svg class="abs" style="left:1195px;top:790.5px" width="10" height="16" viewBox="0 0 10 16"><rect x="0" y="0" width="4" height="4" fill="#b6b6b6"/><rect x="6" y="0" width="4" height="4" fill="#b6b6b6"/><rect x="0" y="6" width="4" height="4" fill="#b6b6b6"/><rect x="6" y="6" width="4" height="4" fill="#b6b6b6"/><rect x="0" y="12" width="4" height="4" fill="#b6b6b6"/><rect x="6" y="12" width="4" height="4" fill="#b6b6b6"/></svg>
<div class="t th" style="left:929.500px;top:838px">Последняя поисковая фраза</div>
<div class="t th" style="left:1100.500px;top:838px;width:107px;text-align:right"><span class="tri"></span>Визиты</div>

<svg class="abs" style="left:0;top:0;pointer-events:none" width="1252" height="871" viewBox="0 0 1252 871">
<line x1="224" y1="316.5" x2="503.5" y2="316.5" stroke="#e3e3e3" stroke-width="1"/>
<line x1="224" y1="380.5" x2="503.5" y2="380.5" stroke="#e3e3e3" stroke-width="1"/>
<line x1="224" y1="443.5" x2="503.5" y2="443.5" stroke="#e3e3e3" stroke-width="1"/>
<line x1="254.5" y1="317" x2="254.5" y2="443" stroke="#e2e2e2" stroke-width="1" stroke-dasharray="8 3"/>
<line x1="257.5" y1="317" x2="257.5" y2="443" stroke="#e2e2e2" stroke-width="1" stroke-dasharray="8 3"/>
<line x1="260.5" y1="317" x2="260.5" y2="443" stroke="#e2e2e2" stroke-width="1" stroke-dasharray="8 3"/>
<line x1="263.5" y1="317" x2="263.5" y2="443" stroke="#e2e2e2" stroke-width="1" stroke-dasharray="8 3"/>
<line x1="266.5" y1="317" x2="266.5" y2="443" stroke="#e2e2e2" stroke-width="1" stroke-dasharray="8 3"/>
<line x1="270.5" y1="317" x2="270.5" y2="443" stroke="#e2e2e2" stroke-width="1" stroke-dasharray="8 3"/>
<line x1="273.5" y1="317" x2="273.5" y2="443" stroke="#e2e2e2" stroke-width="1" stroke-dasharray="8 3"/>
<line x1="276.5" y1="317" x2="276.5" y2="443" stroke="#e2e2e2" stroke-width="1" stroke-dasharray="8 3"/>
<line x1="418.5" y1="317" x2="418.5" y2="443" stroke="#e2e2e2" stroke-width="1" stroke-dasharray="8 3"/>
<line x1="421.5" y1="317" x2="421.5" y2="443" stroke="#e2e2e2" stroke-width="1" stroke-dasharray="8 3"/>
<line x1="462.5" y1="317" x2="462.5" y2="443" stroke="#e2e2e2" stroke-width="1" stroke-dasharray="8 3"/>
<line x1="465.5" y1="317" x2="465.5" y2="443" stroke="#e2e2e2" stroke-width="1" stroke-dasharray="8 3"/>
<polyline points="224.0,375.29 227.1,368.7 230.2,353.73 233.3,359.72 236.4,359.12 239.5,377.69 242.6,366.31 245.7,368.7 248.8,381.28 251.9,362.11 255.0,380.09 258.1,368.7 261.2,381.28 264.3,365.11 267.4,380.09 270.5,376.49 273.6,374.69 276.7,391.47 279.8,376.73 282.9,362.11 286.0,372.3 289.1,378.89 292.2,375.89 295.3,365.71 298.4,373.5 301.5,371.1 304.6,373.5 307.7,369.9 310.8,371.1 313.9,353.73 317.0,350.73 320.1,378.89 323.2,366.31 326.3,368.7 329.4,378.29 332.5,382.48 335.6,378.29 338.7,368.7 341.8,378.89 344.9,371.1 348.0,363.31 351.1,372.3 354.2,369.3 357.3,366.31 360.4,371.1 363.5,353.13 366.6,364.51 369.7,366.31 372.8,383.68 375.9,373.5 379.0,373.5 382.1,374.93 385.2,376.13 388.3,373.5 391.4,368.7 394.5,375.29 397.6,374.09 400.7,366.07 403.8,371.1 406.9,375.29 410.0,368.1 413.1,330.97 416.2,351.33 419.3,350.13 422.4,332.16 425.5,349.54 428.6,349.77 431.7,351.33 434.8,338.75 437.9,332.16 441.0,351.33 444.1,348.34 447.2,341.15 450.3,350.13 453.4,327.37 456.5,341.75 459.6,344.74 462.7,333.36 465.8,339.35 468.9,330.97 472.0,341.15 475.1,336.96 478.2,341.15 481.3,347.14 484.4,352.17 487.5,328.57 490.6,328.57 493.7,338.75 496.8,342.95 499.9,343.54 503.0,354.93" fill="none" stroke="#8fc064" stroke-width="2" stroke-linejoin="round" stroke-linecap="round"/>
<rect x="247.3" y="435.9" width="37.3" height="16.2" rx="8.1" ry="8.1" fill="#cc0612"/><path d="M249.3,447.0 L249.8,453.6 L256.3,451.1 Z" fill="#cc0612"/><text x="276.8" y="447.2" text-anchor="middle" font-family="Liberation Sans, sans-serif" font-weight="700" font-size="9" fill="#fff">Н</text>
<ellipse cx="420.5" cy="444.0" rx="9" ry="8.1" fill="#cc0612"/><path d="M412.5,447.0 L413.0,453.6 L419.5,451.1 Z" fill="#cc0612"/><text x="420.8" y="447.2" text-anchor="middle" font-family="Liberation Sans, sans-serif" font-weight="700" font-size="9" fill="#fff">Н</text>
<ellipse cx="464.5" cy="444.0" rx="9" ry="8.1" fill="#cc0612"/><path d="M456.5,447.0 L457.0,453.6 L463.5,451.1 Z" fill="#cc0612"/><text x="464.8" y="447.2" text-anchor="middle" font-family="Liberation Sans, sans-serif" font-weight="700" font-size="9" fill="#fff">Н</text>
<line x1="577" y1="316.5" x2="855.7" y2="316.5" stroke="#e3e3e3" stroke-width="1"/>
<line x1="577" y1="380.5" x2="855.7" y2="380.5" stroke="#e3e3e3" stroke-width="1"/>
<line x1="577" y1="443.5" x2="855.7" y2="443.5" stroke="#e3e3e3" stroke-width="1"/>
<line x1="607.5" y1="317" x2="607.5" y2="443" stroke="#e2e2e2" stroke-width="1" stroke-dasharray="8 3"/>
<line x1="610.5" y1="317" x2="610.5" y2="443" stroke="#e2e2e2" stroke-width="1" stroke-dasharray="8 3"/>
<line x1="613.5" y1="317" x2="613.5" y2="443" stroke="#e2e2e2" stroke-width="1" stroke-dasharray="8 3"/>
<line x1="616.5" y1="317" x2="616.5" y2="443" stroke="#e2e2e2" stroke-width="1" stroke-dasharray="8 3"/>
<line x1="619.5" y1="317" x2="619.5" y2="443" stroke="#e2e2e2" stroke-width="1" stroke-dasharray="8 3"/>
<line x1="623.5" y1="317" x2="623.5" y2="443" stroke="#e2e2e2" stroke-width="1" stroke-dasharray="8 3"/>
<line x1="626.5" y1="317" x2="626.5" y2="443" stroke="#e2e2e2" stroke-width="1" stroke-dasharray="8 3"/>
<line x1="629.5" y1="317" x2="629.5" y2="443" stroke="#e2e2e2" stroke-width="1" stroke-dasharray="8 3"/>
<line x1="771.5" y1="317" x2="771.5" y2="443" stroke="#e2e2e2" stroke-width="1" stroke-dasharray="8 3"/>
<line x1="774.5" y1="317" x2="774.5" y2="443" stroke="#e2e2e2" stroke-width="1" stroke-dasharray="8 3"/>
<line x1="815.5" y1="317" x2="815.5" y2="443" stroke="#e2e2e2" stroke-width="1" stroke-dasharray="8 3"/>
<line x1="818.5" y1="317" x2="818.5" y2="443" stroke="#e2e2e2" stroke-width="1" stroke-dasharray="8 3"/>
<polyline points="577.0,379.73 580.09,378.29 583.18,365.71 586.28,371.1 589.37,372.3 592.46,383.08 595.55,380.68 598.64,375.89 601.74,388.47 604.83,374.69 607.92,391.47 611.01,382.48 614.1,396.26 617.2,377.69 620.29,391.47 623.38,383.08 626.47,384.88 629.56,399.25 632.66,389.07 635.75,379.49 638.84,387.27 641.93,384.88 645.02,382.48 648.12,375.89 651.21,382.48 654.3,381.28 657.39,380.92 660.48,378.89 663.58,377.09 666.67,367.51 669.76,368.1 672.85,383.08 675.94,373.5 679.04,375.29 682.13,383.08 685.22,391.47 688.31,386.67 691.4,382.48 694.5,381.88 697.59,380.68 700.68,373.5 703.77,387.27 706.86,382.48 709.96,375.29 713.05,381.28 716.14,357.32 719.23,372.3 722.32,375.29 725.42,393.86 728.51,386.08 731.6,379.49 734.69,381.88 737.78,387.27 740.88,383.68 743.97,379.85 747.06,381.88 750.15,387.87 753.24,375.89 756.34,377.69 759.43,382.48 762.52,376.49 765.61,341.75 768.7,355.53 771.8,356.12 774.89,336.96 777.98,360.92 781.07,360.92 784.16,358.52 787.26,344.74 790.35,342.11 793.44,357.32 796.53,362.11 799.62,353.73 802.72,365.11 805.81,335.76 808.9,346.54 811.99,350.97 815.08,338.51 818.18,344.14 821.27,341.75 824.36,348.34 827.45,348.58 830.54,350.13 833.64,352.53 836.73,358.52 839.82,338.51 842.91,339.71 846.0,346.54 849.1,349.54 852.19,352.53 855.28,363.91" fill="none" stroke="#f5cf4a" stroke-width="2" stroke-linejoin="round" stroke-linecap="round"/>
<rect x="600.3" y="435.9" width="37.3" height="16.2" rx="8.1" ry="8.1" fill="#cc0612"/><path d="M602.3,447.0 L602.8,453.6 L609.3,451.1 Z" fill="#cc0612"/><text x="629.8" y="447.2" text-anchor="middle" font-family="Liberation Sans, sans-serif" font-weight="700" font-size="9" fill="#fff">Н</text>
<ellipse cx="774.2" cy="444.0" rx="9" ry="8.1" fill="#cc0612"/><path d="M766.2,447.0 L766.7,453.6 L773.2,451.1 Z" fill="#cc0612"/><text x="774.5" y="447.2" text-anchor="middle" font-family="Liberation Sans, sans-serif" font-weight="700" font-size="9" fill="#fff">Н</text>
<ellipse cx="818.2" cy="444.0" rx="9" ry="8.1" fill="#cc0612"/><path d="M810.2,447.0 L810.7,453.6 L817.2,451.1 Z" fill="#cc0612"/><text x="818.5" y="447.2" text-anchor="middle" font-family="Liberation Sans, sans-serif" font-weight="700" font-size="9" fill="#fff">Н</text>
<polygon points="688.9,656.7 688.9,643.0 690.69,647.31 692.49,638.69 694.28,644.44 696.07,643.72 697.87,639.41 699.66,640.85 701.45,644.44 703.25,652.35 705.04,643.0 706.83,637.25 708.63,641.56 710.42,645.16 712.21,645.88 714.01,643.72 715.8,645.16 717.59,648.03 719.39,653.78 721.18,648.03 722.97,640.85 724.77,642.28 726.56,648.75 728.35,649.47 730.15,647.31 731.94,650.19 733.74,644.44 735.53,645.16 737.32,645.16 739.12,637.97 740.91,643.72 742.7,639.41 744.5,652.35 746.29,635.81 748.08,641.56 749.88,648.03 751.67,648.75 753.46,642.28 755.26,640.85 757.05,649.47 758.84,645.88 760.64,643.0 762.43,651.63 764.22,646.6 766.02,640.85 767.81,643.72 769.6,647.31 771.4,641.56 773.19,645.16 774.98,650.91 776.78,648.03 778.57,645.16 780.36,646.6 782.16,645.16 783.95,648.03 785.74,645.88 787.54,645.16 789.33,651.63 791.12,643.0 792.92,648.03 794.71,647.31 796.5,639.41 798.3,641.56 800.09,644.44 801.88,645.88 803.68,646.6 805.47,648.03 807.26,649.47 809.06,649.47 810.85,643.72 812.65,646.6 814.44,648.75 816.23,653.78 818.03,648.03 819.82,647.31 821.61,646.6 823.41,645.88 825.2,645.88 826.99,645.16 828.79,644.44 830.58,643.72 832.37,643.0 834.17,643.72 835.96,647.31 837.75,650.19 839.55,646.6 841.34,645.88 843.13,632.94 844.93,632.22 846.72,645.16 848.51,645.88 850.31,641.56 852.1,644.44 852.1,656.7" fill="#abd9ec"/>
<polyline points="688.9,643.0 690.69,647.31 692.49,638.69 694.28,644.44 696.07,643.72 697.87,639.41 699.66,640.85 701.45,644.44 703.25,652.35 705.04,643.0 706.83,637.25 708.63,641.56 710.42,645.16 712.21,645.88 714.01,643.72 715.8,645.16 717.59,648.03 719.39,653.78 721.18,648.03 722.97,640.85 724.77,642.28 726.56,648.75 728.35,649.47 730.15,647.31 731.94,650.19 733.74,644.44 735.53,645.16 737.32,645.16 739.12,637.97 740.91,643.72 742.7,639.41 744.5,652.35 746.29,635.81 748.08,641.56 749.88,648.03 751.67,648.75 753.46,642.28 755.26,640.85 757.05,649.47 758.84,645.88 760.64,643.0 762.43,651.63 764.22,646.6 766.02,640.85 767.81,643.72 769.6,647.31 771.4,641.56 773.19,645.16 774.98,650.91 776.78,648.03 778.57,645.16 780.36,646.6 782.16,645.16 783.95,648.03 785.74,645.88 787.54,645.16 789.33,651.63 791.12,643.0 792.92,648.03 794.71,647.31 796.5,639.41 798.3,641.56 800.09,644.44 801.88,645.88 803.68,646.6 805.47,648.03 807.26,649.47 809.06,649.47 810.85,643.72 812.65,646.6 814.44,648.75 816.23,653.78 818.03,648.03 819.82,647.31 821.61,646.6 823.41,645.88 825.2,645.88 826.99,645.16 828.79,644.44 830.58,643.72 832.37,643.0 834.17,643.72 835.96,647.31 837.75,650.19 839.55,646.6 841.34,645.88 843.13,632.94 844.93,632.22 846.72,645.16 848.51,645.88 850.31,641.56 852.1,644.44" fill="none" stroke="#62b4d8" stroke-width="1"/>
<polygon points="688.9,810.2 688.9,782.19 690.71,794.41 692.53,795.13 694.34,795.13 696.15,793.69 697.97,796.56 699.78,796.56 701.59,796.56 703.41,796.28 705.22,797.28 707.03,797.0 708.85,795.85 710.66,796.13 712.47,796.85 714.29,797.28 716.1,796.28 717.91,795.85 719.73,796.28 721.54,796.28 723.35,796.56 725.17,795.13 726.98,795.41 728.79,795.85 730.61,793.98 732.42,794.84 734.23,796.56 736.05,796.28 737.86,796.85 739.67,798.0 741.49,797.28 743.3,797.28 745.11,796.28 746.93,796.85 748.74,796.56 750.55,796.56 752.37,796.85 754.18,796.28 755.99,796.56 757.81,794.41 759.62,796.28 761.43,796.56 763.25,795.85 765.06,795.41 766.87,796.85 768.69,797.28 770.5,797.28 772.31,797.28 774.13,797.71 775.94,795.85 777.75,795.13 779.57,796.56 781.38,796.85 783.19,796.56 785.01,796.85 786.82,796.28 788.63,795.13 790.45,789.38 792.26,795.13 794.07,795.13 795.89,796.28 797.7,798.0 799.51,799.44 801.33,799.44 803.14,793.69 804.95,793.4 806.77,798.0 808.58,797.71 810.39,797.28 812.21,800.16 814.02,798.0 815.83,797.28 817.65,798.0 819.46,798.72 821.27,797.71 823.09,798.29 824.9,798.0 826.71,798.72 828.53,799.15 830.34,799.15 832.15,799.15 833.97,798.29 835.78,798.0 837.59,799.15 839.41,797.28 841.22,797.71 843.03,799.15 844.85,799.15 846.66,798.72 848.47,799.15 850.29,796.56 852.1,793.4 852.1,810.2" fill="#abd9ec"/>
<polyline points="688.9,782.19 690.71,794.41 692.53,795.13 694.34,795.13 696.15,793.69 697.97,796.56 699.78,796.56 701.59,796.56 703.41,796.28 705.22,797.28 707.03,797.0 708.85,795.85 710.66,796.13 712.47,796.85 714.29,797.28 716.1,796.28 717.91,795.85 719.73,796.28 721.54,796.28 723.35,796.56 725.17,795.13 726.98,795.41 728.79,795.85 730.61,793.98 732.42,794.84 734.23,796.56 736.05,796.28 737.86,796.85 739.67,798.0 741.49,797.28 743.3,797.28 745.11,796.28 746.93,796.85 748.74,796.56 750.55,796.56 752.37,796.85 754.18,796.28 755.99,796.56 757.81,794.41 759.62,796.28 761.43,796.56 763.25,795.85 765.06,795.41 766.87,796.85 768.69,797.28 770.5,797.28 772.31,797.28 774.13,797.71 775.94,795.85 777.75,795.13 779.57,796.56 781.38,796.85 783.19,796.56 785.01,796.85 786.82,796.28 788.63,795.13 790.45,789.38 792.26,795.13 794.07,795.13 795.89,796.28 797.7,798.0 799.51,799.44 801.33,799.44 803.14,793.69 804.95,793.4 806.77,798.0 808.58,797.71 810.39,797.28 812.21,800.16 814.02,798.0 815.83,797.28 817.65,798.0 819.46,798.72 821.27,797.71 823.09,798.29 824.9,798.0 826.71,798.72 828.53,799.15 830.34,799.15 832.15,799.15 833.97,798.29 835.78,798.0 837.59,799.15 839.41,797.28 841.22,797.71 843.03,799.15 844.85,799.15 846.66,798.72 848.47,799.15 850.29,796.56 852.1,793.4" fill="none" stroke="#6fa9c4" stroke-width="1"/>
<path d="M364.10,656.90 A110,110 0 1 1 257.14,741.22 L337.85,760.60 A27,27 0 1 0 364.10,739.90 Z" fill="#97cc64" stroke="#97cc64" stroke-width="0.4"/>
<path d="M257.14,741.22 A110,110 0 0 1 313.99,668.98 L351.80,742.86 A27,27 0 0 0 337.85,760.60 Z" fill="#ffd963" stroke="#ffd963" stroke-width="0.4"/>
<path d="M313.99,668.98 A110,110 0 0 1 341.98,659.15 L358.67,740.45 A27,27 0 0 0 351.80,742.86 Z" fill="#fd5a3e" stroke="#fd5a3e" stroke-width="0.4"/>
<path d="M341.98,659.15 A110,110 0 0 1 361.22,656.94 L363.39,739.91 A27,27 0 0 0 358.67,740.45 Z" fill="#77b6e7" stroke="#77b6e7" stroke-width="0.4"/>
<path d="M361.22,656.94 A110,110 0 0 1 364.10,656.90 L364.10,739.90 A27,27 0 0 0 363.39,739.91 Z" fill="#a955b8" stroke="#a955b8" stroke-width="0.4"/>

</svg>

</body>
</html>
